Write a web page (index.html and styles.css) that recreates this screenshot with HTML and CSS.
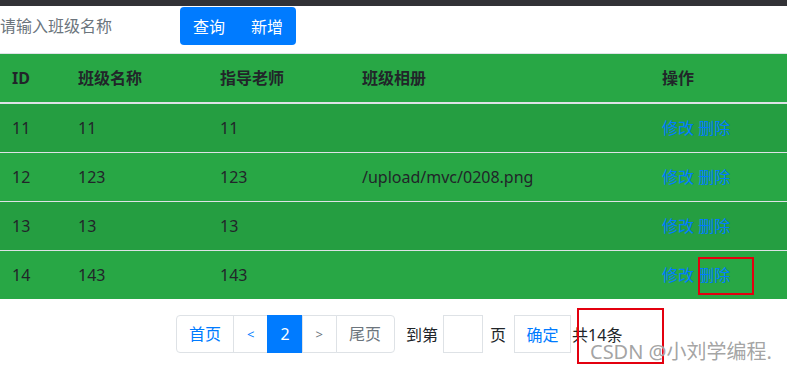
FILE: index.html
```html
<!DOCTYPE html>
<html lang="zh-CN">
<head>
    <meta charset="UTF-8">
    <title>班级管理</title>
    <link rel="stylesheet" href="styles.css">
</head>
<body>
<div class="page">
    <div class="topbar"></div>

    <div class="toolbar">
        <input class="search" type="text" placeholder="请输入班级名称">
        <div class="btn-group">
            <button class="btn">查询</button>
            <button class="btn">新增</button>
        </div>
    </div>

    <table class="table">
        <thead>
            <tr>
                <th class="c-id">ID</th>
                <th class="c-name">班级名称</th>
                <th class="c-teacher">指导老师</th>
                <th class="c-album">班级相册</th>
                <th>操作</th>
            </tr>
        </thead>
        <tbody>
            <tr>
                <td>11</td><td>11</td><td>11</td><td></td>
                <td><a href="#">修改</a> <a href="#">删除</a></td>
            </tr>
            <tr>
                <td>12</td><td>123</td><td>123</td><td>/upload/mvc/0208.png</td>
                <td><a href="#">修改</a> <a href="#">删除</a></td>
            </tr>
            <tr>
                <td>13</td><td>13</td><td>13</td><td></td>
                <td><a href="#">修改</a> <a href="#">删除</a></td>
            </tr>
            <tr>
                <td>14</td><td>143</td><td>143</td><td></td>
                <td><a href="#">修改</a> <a href="#">删除</a></td>
            </tr>
        </tbody>
    </table>

    <div class="pager">
        <ul class="pagination">
            <li class="page-item"><a class="page-link" href="#">首页</a></li>
            <li class="page-item"><a class="page-link arrow" href="#">&lt;</a></li>
            <li class="page-item active"><a class="page-link" href="#">2</a></li>
            <li class="page-item disabled"><a class="page-link arrow" href="#">&gt;</a></li>
            <li class="page-item disabled"><a class="page-link" href="#">尾页</a></li>
        </ul>
        <span class="goto">到第</span>
        <input class="page-input" type="text">
        <span class="goto-page">页</span>
        <button class="confirm">确定</button>
        <span class="total">共14条</span>
    </div>

    <!-- annotation boxes from the screenshot -->
    <div class="mark mark-del"></div>
    <div class="mark mark-total"></div>
    <div class="watermark">CSDN @小刘学编程.</div>
</div>
</body>
</html>
```

FILE: styles.css
```css
body {
    margin: 0;
    padding: 0;
    font-family: "Segoe UI", "Noto Sans", "Noto Sans CJK SC", sans-serif;
    font-size: 16px;
    color: #212529;
    background-color: #fff;
    overflow: hidden;
}

.page {
    position: relative;
    width: 787px;
    height: 371px;
}

.topbar {
    height: 6px;
    background-color: #323236;
}

.toolbar {
    display: flex;
    align-items: center;
    height: 38px;
    margin-top: 1px;
}

.search {
    width: 172px;
    height: 38px;
    margin-right: 8px;
    padding: 0;
    border: none;
    outline: none;
    font-family: inherit;
    font-size: 16px;
    color: #495057;
    box-sizing: border-box;
}

.search::placeholder {
    color: #6c757d;
}

.btn-group {
    display: flex;
}

.btn {
    width: 58px;
    height: 38px;
    padding: 0;
    border: none;
    background-color: #007bff;
    color: #fff;
    font-family: inherit;
    font-size: 16px;
    cursor: pointer;
}

.btn:first-child {
    border-radius: 4px 0 0 4px;
}

.btn:last-child {
    border-radius: 0 4px 4px 0;
}

.table {
    width: 100%;
    margin-top: 8px;
    border-collapse: collapse;
    background-color: #28a745;
}

.table th,
.table td {
    padding: 12px;
    line-height: 24px;
    text-align: left;
    vertical-align: top;
    border-top: 1px solid #dee2e6;
}

.table th {
    font-weight: bold;
}

.table thead th {
    border-bottom: 2px solid #dee2e6;
}

.table tbody tr:nth-child(odd) {
    background-color: rgba(0, 0, 0, 0.05);
}

.c-id { width: 42px; }
.c-name { width: 118px; }
.c-teacher { width: 118px; }
.c-album { width: 276px; }

.table a {
    color: #007bff;
    text-decoration: none;
}

.pager {
    display: flex;
    align-items: center;
    margin-top: 16px;
    padding-left: 176px;
}

.pagination {
    display: flex;
    list-style: none;
    margin: 0;
    padding: 0;
}

.page-link {
    display: block;
    padding: 8px 12px;
    line-height: 20px;
    color: #007bff;
    text-decoration: none;
    background-color: #fff;
    border: 1px solid #dee2e6;
    margin-left: -1px;
}

.page-item:first-child .page-link {
    margin-left: 0;
    border-radius: 4px 0 0 4px;
}

.page-item:last-child .page-link {
    border-radius: 0 4px 4px 0;
    padding: 8px 13px 8px 12px;
}

.page-link.arrow {
    font-size: 13px;
    padding: 8px 13px;
}

.page-item.active .page-link {
    background-color: #007bff;
    border-color: #007bff;
    color: #fff;
    padding: 8px 12px;
}

.page-item.disabled .page-link {
    color: #6c757d;
}

.goto {
    margin-left: 11px;
}

.page-input {
    width: 40px;
    height: 38px;
    margin-left: 5px;
    box-sizing: border-box;
    border: 1px solid #dee2e6;
    outline: none;
}

.goto-page {
    margin-left: 7px;
}

.confirm {
    height: 38px;
    width: 57px;
    margin-left: 8px;
    padding: 0;
    border: 1px solid #dee2e6;
    background-color: #fff;
    color: #007bff;
    font-family: inherit;
    font-size: 16px;
}

.total {
    margin-left: 1px;
}

.mark {
    position: absolute;
    border: 2px solid #e3000f;
    box-sizing: border-box;
}

.mark-del {
    left: 698px;
    top: 257px;
    width: 56px;
    height: 38px;
}

.mark-total {
    left: 577px;
    top: 308px;
    width: 87px;
    height: 56px;
}

.watermark {
    position: absolute;
    left: 590px;
    top: 340px;
    font-size: 20px;
    line-height: 24px;
    color: rgba(140, 140, 140, 0.8);
    text-shadow: 0 0 1px rgba(255, 255, 255, 0.9);
    white-space: nowrap;
}
```
